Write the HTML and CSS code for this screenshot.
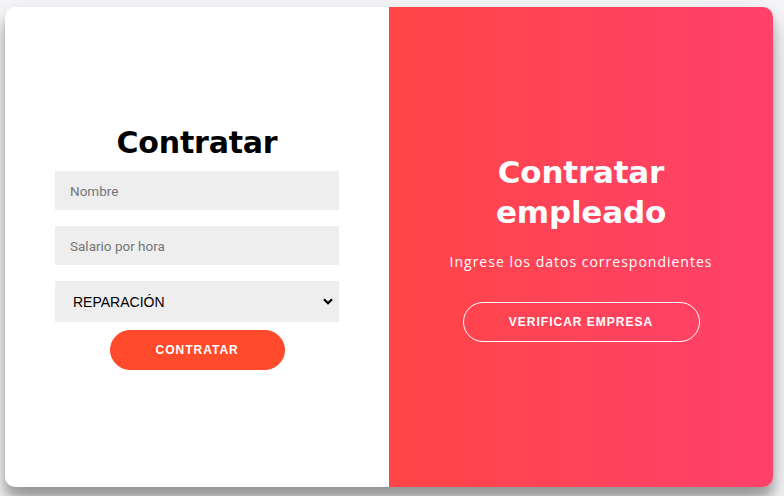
FILE: index.html
```html
<!DOCTYPE html>
<html lang="es">
<head>
<meta charset="utf-8">
<title>Contratar</title>
<link rel="stylesheet" href="styles.css">
</head>
<body>
<div class="container">
  <div class="form-panel">
    <form class="form" onsubmit="return false">
      <h1 class="title">Contratar</h1>
      <input class="field" type="text" placeholder="Nombre">
      <input class="field" type="text" placeholder="Salario por hora">
      <select class="field select">
        <option>REPARACIÓN</option>
      </select>
      <button class="btn" type="button">Contratar</button>
    </form>
  </div>
  <div class="overlay-panel">
    <h1 class="title title-light">Contratar empleado</h1>
    <p class="subtitle">Ingrese los datos correspondientes</p>
    <button class="btn btn-ghost" type="button">Verificar empresa</button>
  </div>
</div>
</body>
</html>
```
FILE: styles.css
```css
* { box-sizing: border-box; }
html, body { margin: 0; padding: 0; }
body {
  background: #f6f5f7;
  font-family: "DejaVu Sans", sans-serif;
  padding: 7px 0 0 5px;
  height: 496px;
  overflow: hidden;
}
.container {
  width: 768px;
  height: 480px;
  background: #fff;
  border-radius: 10px;
  box-shadow: 0 14px 28px rgba(0,0,0,0.25), 0 10px 10px rgba(0,0,0,0.22);
  display: flex;
  overflow: hidden;
}
.form-panel {
  width: 384px;
  height: 100%;
}
.form {
  height: 100%;
  padding: 0 50px;
  display: flex;
  flex-direction: column;
  align-items: center;
  justify-content: center;
  text-align: center;
}
.title {
  font-family: "DejaVu Sans", sans-serif;
  font-weight: bold;
  font-size: 30px;
  line-height: 37px;
  margin: 0 0 2px;
  color: #000;
  letter-spacing: -0.2px;
}
.field {
  display: block;
  width: 100%;
  background: #eee;
  border: none;
  padding: 12px 15px;
  margin: 8px 0;
  font-family: Roboto, "Liberation Sans", sans-serif;
  font-size: 13.5px;
  height: 39px;
  outline: none;
}
.field::placeholder { color: #757575; }
.select {
  appearance: none;
  -webkit-appearance: none;
  height: 41px;
  padding: 0 18px;
  font-family: "Liberation Sans", Arial, sans-serif;
  font-size: 14px;
  color: #000;
  border-radius: 0;
  background: #eee url("data:image/svg+xml,%3Csvg xmlns='http://www.w3.org/2000/svg' width='10' height='7' viewBox='0 0 10 7'%3E%3Cpath d='M1 1.2 5 5.2 9 1.2' fill='none' stroke='%23000' stroke-width='2.2'/%3E%3C/svg%3E") no-repeat right 6px center;
  background-size: 10px 7px;
}
.btn {
  border-radius: 20px;
  border: 1px solid #ff4b2b;
  background: #ff4b2b;
  color: #fff;
  font-family: "Liberation Sans", Arial, sans-serif;
  font-size: 12px;
  font-weight: bold;
  padding: 12px 45px;
  letter-spacing: 1px;
  text-transform: uppercase;
  height: 40px;
  width: 175px;
  cursor: pointer;
}
.overlay-panel {
  width: 384px;
  height: 100%;
  background: linear-gradient(to right, #ff4547, #ff416c);
  display: flex;
  flex-direction: column;
  align-items: center;
  justify-content: center;
  text-align: center;
  padding: 0 40px;
  color: #fff;
}
.title-light {
  color: #fff;
  margin: 0;
  font-size: 31px;
  line-height: 40px;
}
.subtitle {
  font-family: "Open Sans", sans-serif;
  font-size: 14px;
  font-weight: 400;
  line-height: 20px;
  letter-spacing: 1px;
  margin: 20px 0 30px;
}
.btn-ghost {
  background: transparent;
  border-color: #fff;
  width: 237px;
}
```
